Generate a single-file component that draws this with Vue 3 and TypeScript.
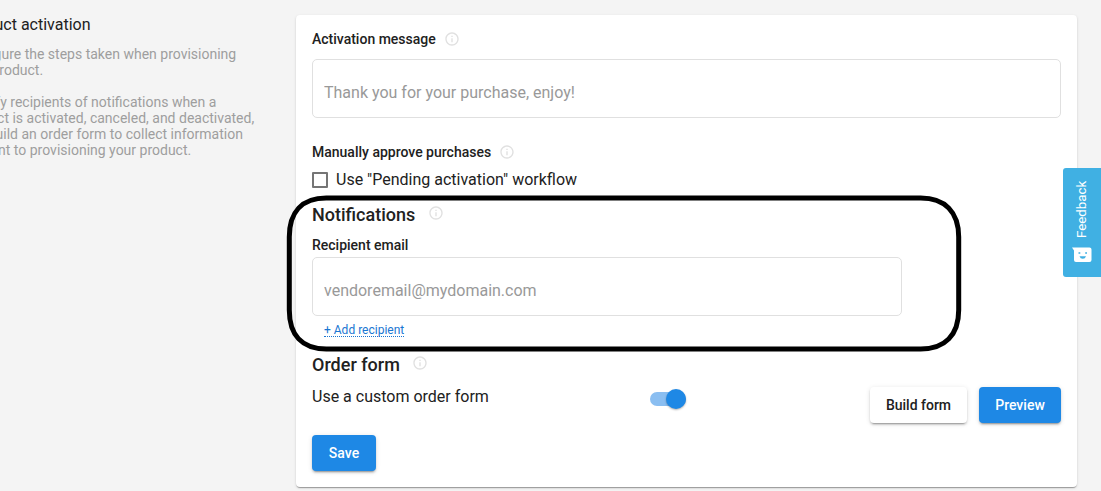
<script setup lang="ts">
import { ref, h, type FunctionalComponent } from 'vue'

const message = ref('')
const email = ref('')
const pending = ref(false)
const customForm = ref(true)

const InfoIcon: FunctionalComponent = () =>
  h('svg', { viewBox: '0 0 24 24', width: 16, height: 16, 'aria-hidden': 'true' }, [
    h('path', {
      fill: 'currentColor',
      d: 'M11 17h2v-6h-2v6zm1-15C6.48 2 2 6.48 2 12s4.480 10 10 10 10-4.480 10-10S17.520 2 12 2zm0 18c-4.410 0-8-3.590-8-8s3.590-8 8-8 8 3.590 8 8-3.590 8-8 8zM11 9h2V7h-2v2z',
    }),
  ])
</script>

<template>
  <main class="page">
    <aside class="intro">
      <h1>Product activation</h1>
      <p>Configure the steps taken when provisioning<br />your product.</p>
      <p>
        Specify recipients of notifications when a<br />product is activated, canceled, and deactivated,<br />and
        build an order form to collect information<br />relevant to provisioning your product.
      </p>
    </aside>

    <section class="card">
      <div class="label activation">Activation message <InfoIcon class="info" /></div>
      <input v-model="message" class="field" placeholder="Thank you for your purchase, enjoy!" />

      <div class="label manual">Manually approve purchases <InfoIcon class="info" /></div>
      <label class="check">
        <input v-model="pending" type="checkbox" />
        <span>Use "Pending activation" workflow</span>
      </label>

      <div class="notifications">
        <h2>Notifications <InfoIcon class="info" /></h2>
        <div class="label recipient">Recipient email</div>
        <input v-model="email" class="field short" placeholder="vendoremail@mydomain.com" />
        <div class="add-row"><a class="add">+ Add recipient</a></div>
        <svg class="outline" width="680" height="162" viewBox="0 0 680 162" aria-hidden="true">
          <path
            d="M43.300 6H637.700C662 6 675.700 20 675.700 45V118C675.700 143 662 157 637.700 157H43.300C19 157 6.300 143 6.300 118V45C6.300 20 19 6 43.300 6Z"
            fill="none" stroke="#000" stroke-width="5"
          />
        </svg>
      </div>

      <h2 class="order-title">Order form <InfoIcon class="info" /></h2>
      <div class="order-row">
        <span class="order-text">Use a custom order form</span>
        <button
          class="toggle"
          :class="{ on: customForm }"
          role="switch"
          aria-label="Use a custom order form"
          :aria-checked="customForm"
          @click="customForm = !customForm"
        ><i></i></button>
        <div class="actions">
          <button class="btn build">Build form</button>
          <button class="btn primary preview">Preview</button>
        </div>
      </div>
      <button class="btn primary save">Save</button>
    </section>

    <button class="feedback">
      <span>Feedback</span>
      <svg width="20" height="16" viewBox="0 0 20 16" aria-hidden="true">
        <path d="M0 .5h17.500q2 0 2 2v10.500q0 2-2 2H4q-2 0-2-2V3.500z" fill="#fff" />
        <path d="M6.500 6h1.800M13.200 6h1.800" stroke="#40b0e3" stroke-width="1.300" />
        <path d="M7.500 9.200h6.500q-.8 2.500-3.250 2.500T7.500 9.200z" fill="#40b0e3" />
      </svg>
    </button>
  </main>
</template>

<style>
body { margin: 0; background: #f4f4f4; }
</style>

<style scoped>
* { box-sizing: border-box; }
.page {
  position: relative;
  display: flex;
  align-items: flex-start;
  width: 1101px;
  height: 491px;
  overflow: hidden;
  background: #f4f4f4;
  color: #212121;
  font-family: Roboto, sans-serif;
}
.intro { flex: 0 0 335px; margin-left: -39px; padding-top: 15px; white-space: nowrap; }
.intro h1 { margin: 0 0 11px; font-size: 16px; font-weight: 400; line-height: 20px; }
.intro p { margin: 0 0 16px; font-size: 14px; line-height: 16px; color: #9e9e9e; }
.card {
  width: 781px;
  height: 472px;
  margin-top: 15px;
  padding: 0 16px;
  background: #fff;
  border-radius: 4px;
  box-shadow: 0 2px 1px -1px rgba(0,0,0,.2), 0 1px 1px rgba(0,0,0,.14), 0 1px 3px rgba(0,0,0,.12);
}
.label { display: flex; align-items: center; font-size: 14px; font-weight: 500; line-height: 16px; }
.info { flex: none; margin-left: 8px; color: #e0e0e0; }
.activation { padding-top: 16px; }
.field {
  display: block;
  width: 749px;
  height: 59px;
  margin: 12px 0 0;
  padding: 8px 11px 0;
  border: 1px solid #e0e0e0;
  border-radius: 5px;
  outline: none;
  background: #fff;
  font: 400 16px Roboto, sans-serif;
}
.field::placeholder { color: #999; opacity: 1; }
.manual { margin-top: 26px; }
.check { display: flex; align-items: center; height: 20px; margin-top: 10px; font-size: 16px; }
.check input { appearance: none; width: 16px; height: 16px; margin: 0 8px 0 0; border: 2px solid #757575; border-radius: 1px; }
.check span { line-height: 20px; }
.notifications { position: relative; height: 150px; margin-top: 15px; }
.outline { position: absolute; left: -29px; top: -13px; z-index: 1; pointer-events: none; }
h2 { display: flex; align-items: center; margin: 0; font-size: 18px; line-height: 20px; font-weight: 500; }
h2 .info { margin: -4px 0 0 12.500px; }
.recipient { margin-top: 12px; }
.short { width: 590px; margin-top: 4px; }
.add-row { display: flex; padding: 8px 0 0 12px; }
.add { height: 13px; font-size: 12px; line-height: 13px; color: #1976d2; border-bottom: 1px dotted #1976d2; }
.order-title { margin-top: 0; }
.order-row { display: flex; align-items: flex-start; height: 48px; margin-top: 12px; }
.order-text { width: 338px; font-size: 16px; line-height: 20px; }
.toggle {
  display: flex;
  align-items: center;
  width: 36px;
  height: 14px;
  margin-top: 5px;
  padding: 0;
  border: 0;
  border-radius: 7px;
  background: #bdbdbd;
}
.toggle i { flex: none; width: 20px; height: 20px; border-radius: 50%; background: #fafafa; box-shadow: 0 1px 2px rgba(0,0,0,.3); }
.toggle.on { justify-content: flex-end; background: #8abef1; }
.toggle.on i { background: #1e88e5; }
.actions { display: flex; gap: 12px; margin-left: auto; }
.btn {
  height: 36px;
  padding: 0;
  border: 0;
  border-radius: 4px;
  background: #fff;
  color: #212121;
  font: 500 14px Roboto, sans-serif;
  box-shadow: 0 3px 1px -2px rgba(0,0,0,.2), 0 2px 2px rgba(0,0,0,.14), 0 1px 5px rgba(0,0,0,.12);
}
.primary { background: #1e88e5; color: #fff; }
.build { width: 97px; }
.preview { width: 82px; }
.save { width: 64px; }
.feedback {
  position: absolute;
  left: 1063px;
  top: 168px;
  width: 42px;
  height: 109px;
  display: flex;
  flex-direction: column;
  align-items: center;
  gap: 9px;
  padding: 12px 4px 0 0;
  border: 0;
  border-radius: 3px;
  background: #40b0e3;
  color: #fff;
  font: 400 13.300px Roboto, sans-serif;
}
.feedback span { writing-mode: vertical-rl; transform: rotate(180deg); height: 58px; line-height: 16px; }
</style>
